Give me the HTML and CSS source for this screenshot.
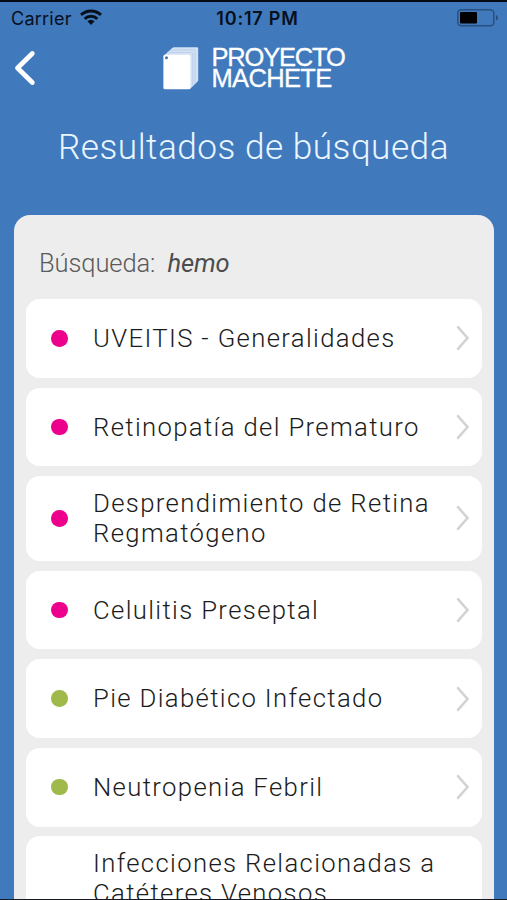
FILE: index.html
```html
<!DOCTYPE html>
<html lang="es">
<head>
<meta charset="utf-8">
<title>Proyecto Machete</title>
<link rel="stylesheet" href="styles.css">
</head>
<body>
<div class="app">
  <div class="status">
    <div class="carrier"><span>Carrier</span>
      <svg class="wifi" viewBox="0 0 22 16"><g fill="none" stroke="#06101c" stroke-width="3"><path d="M1 5.900a14.600 14.600 0 0 1 20 0"/><path d="M4.700 9.800a9.200 9.200 0 0 1 12.600 0"/></g><path d="M7.400 12.300a5.400 5.400 0 0 1 7.200 0L11 16z" fill="#06101c"/></svg>
    </div>
    <div class="time">10:17 PM</div>
    <svg class="battery" viewBox="0 0 42 18"><rect x=".8" y=".8" width="36" height="16" rx="3.500" fill="none" stroke="#28507f" stroke-width="1.500"/><rect x="3" y="3" width="17" height="11.600" rx="1" fill="#000"/><path d="M39 6q2 .5 2 2.800T39 11.500z" fill="#28507f"/></svg>
  </div>
  <header class="bar">
    <svg class="back" viewBox="0 0 22 36"><path d="M18.300 3.500 3.500 18l14.800 14.500" fill="none" stroke="#fff" stroke-width="4.800" stroke-linecap="round" stroke-linejoin="round"/></svg>
    <div class="brand">
      <svg class="logo" viewBox="0 0 36 43"><path d="M1 8.500 9.500.8q.6-.5 1.500-.5h23q1.200 0 1.200 1.200v31.700q0 .8-.6 1.400L27 42z" fill="#d3e1f4"/><path d="M5 7.500 10 3h20.500q1.500 0 1.500 1.500V37M8 5.500h20.500q1.200 0 1.200 1.500v31" fill="none" stroke="#b9cce8" stroke-width=".8"/><rect x=".4" y="7.800" width="27" height="34.400" rx="1.500" fill="#fff"/><circle cx="3.500" cy="10.800" r="1.500" fill="#4a74a8"/></svg>
      <div class="wordmark"><span class="w1">PROYECTO</span><span class="w2">MACHETE</span></div>
    </div>
  </header>
  <h1>Resultados de búsqueda</h1>
  <main class="panel">
    <p class="query">Búsqueda: <em>hemo</em></p>
    <ul>
      <li><i class="dot pink"></i><span>UVEITIS - Generalidades</span><svg class="chev" viewBox="0 0 14 26"><path d="M2 2.200 11.500 13 2 23.800"/></svg></li>
      <li><i class="dot pink"></i><span>Retinopatía del Prematuro</span><svg class="chev" viewBox="0 0 14 26"><path d="M2 2.200 11.500 13 2 23.800"/></svg></li>
      <li class="tall"><i class="dot pink"></i><span>Desprendimiento de Retina<br>Regmatógeno</span><svg class="chev" viewBox="0 0 14 26"><path d="M2 2.200 11.500 13 2 23.800"/></svg></li>
      <li><i class="dot pink"></i><span>Celulitis Preseptal</span><svg class="chev" viewBox="0 0 14 26"><path d="M2 2.200 11.500 13 2 23.800"/></svg></li>
      <li><i class="dot green"></i><span>Pie Diabético Infectado</span><svg class="chev" viewBox="0 0 14 26"><path d="M2 2.200 11.500 13 2 23.800"/></svg></li>
      <li><i class="dot green"></i><span>Neutropenia Febril</span><svg class="chev" viewBox="0 0 14 26"><path d="M2 2.200 11.500 13 2 23.800"/></svg></li>
      <li class="last"><i class="dot"></i><span>Infecciones Relacionadas a<br>Catéteres Venosos</span></li>
    </ul>
  </main>
</div>
</body>
</html>
```
FILE: styles.css
```css
* { box-sizing: border-box; }
body { margin: 0; font-family: Roboto, "Liberation Sans", sans-serif; }
.app {
  width: 507px;
  height: 900px;
  overflow: hidden;
  background: #4079bc;
  border-top: 2px solid #050a14;
  border-bottom: 1px solid #1a1a22;
  display: flex;
  flex-direction: column;
}
.status {
  height: 32px;
  flex: none;
  display: grid;
  grid-template-columns: 1fr auto 1fr;
  align-items: center;
  padding: 0 8px 0 11px;
  font-family: Inter, "Liberation Sans", sans-serif;
  font-size: 18px;
  color: #06101c;
}
.carrier { display: flex; align-items: center; gap: 8px; letter-spacing: .25px; }
.wifi { width: 22px; height: 16px; margin-top: -2px; }
.time { font-weight: 600; letter-spacing: .8px; margin-left: 5px; }
.battery { width: 42px; height: 18px; justify-self: end; margin-top: -1px; }
.bar { height: 69px; flex: none; display: flex; align-items: flex-start; padding: 0 0 0 14px; }
.back { width: 22px; height: 36px; margin-top: 16px; }
.brand { display: flex; margin: 13px 0 0 127px; }
.logo { width: 36px; height: 43px; }
.wordmark {
  margin: 0 0 0 12.500px;
  font: 25.500px/20.500px "Liberation Sans", sans-serif;
  color: #fff;
  -webkit-text-stroke: .3px #fff;
}
.wordmark span { display: block; }
.w1 { letter-spacing: -1.200px; }
.w2 { letter-spacing: -.65px; }
h1 {
  margin: 23px 0 0;
  height: 89px;
  flex: none;
  font-size: 35.200px;
  line-height: 42px;
  font-weight: 300;
  letter-spacing: .5px;
  text-align: center;
  color: #e9f5ff;
}
.panel {
  flex: 1;
  min-height: 0;
  margin: 0 13px 0 13.500px;
  background: #ededed;
  border-radius: 16px 16px 0 0;
  padding: 0 12.500px;
}
.query {
  margin: 0;
  height: 84px;
  padding: 32px 0 0 13px;
  font-size: 25.500px;
  line-height: 32px;
  font-weight: 300;
  letter-spacing: -.1px;
  color: #5a5a5a;
}
.query em { font-weight: 400; color: #4c4c4c; margin-left: 6px; }
ul { list-style: none; margin: 0; padding: 0; display: flex; flex-direction: column; gap: 9.800px; }
li {
  height: 78.800px;
  background: #fff;
  border-radius: 14px;
  display: flex;
  align-items: center;
  padding: 0 12px 0 25px;
  font-size: 25.700px;
  line-height: 29.500px;
  font-weight: 300;
  letter-spacing: 1.350px;
  color: #1c1c1c;
}
li.tall { height: 84.600px; }
li.last { height: 114px; align-items: flex-start; padding-top: 12px; }
li span { flex: 1; white-space: nowrap; padding-top: 1px; }
.dot { width: 16.500px; height: 16.500px; border-radius: 50%; margin-right: 25.500px; flex: none; }
.pink { background: #ec008c; }
.green { background: #9fb94b; }
.chev { width: 14px; height: 26px; flex: none; fill: none; stroke: #d3d3d3; stroke-width: 2.600; stroke-linecap: round; }
```
